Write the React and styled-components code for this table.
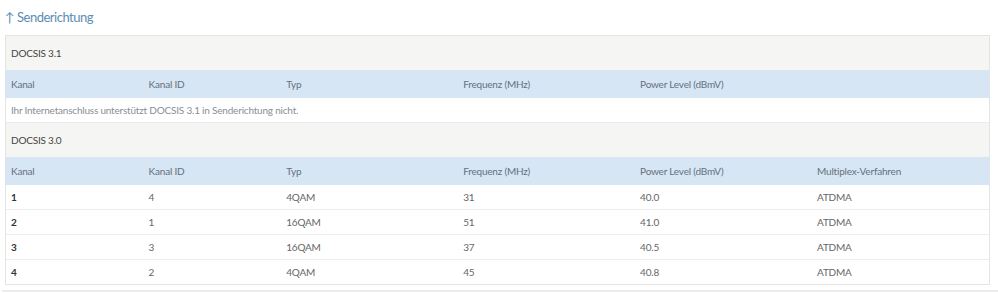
import styled, { createGlobalStyle } from 'styled-components';

const GlobalStyle = createGlobalStyle`
  html, body { margin: 0; padding: 0; background: #fff; }
  body { font-family: "Lato", "Liberation Sans", sans-serif; }
`;

const upstream31 = [];
const upstream30 = [
  { kanal: 1, id: 4, typ: '4QAM', freq: 31, power: '40.0', mux: 'ATDMA' },
  { kanal: 2, id: 1, typ: '16QAM', freq: 51, power: '41.0', mux: 'ATDMA' },
  { kanal: 3, id: 3, typ: '16QAM', freq: 37, power: '40.5', mux: 'ATDMA' },
  { kanal: 4, id: 2, typ: '4QAM', freq: 45, power: '40.8', mux: 'ATDMA' },
];

const App = () => {
  return (
    <>
      <GlobalStyle />
      <Page>
        <Title>↑ Senderichtung</Title>
        <Panel>
          <Table>
            <colgroup>
              <col width="14%" />
              <col width="14%" />
              <col width="18%" />
              <col width="18%" />
              <col width="18%" />
              <col width="18%" />
            </colgroup>
            <tbody>
              <GroupRow>
                <td colSpan={6}>DOCSIS 3.1</td>
              </GroupRow>
              <HeadRow>
                <th>Kanal</th>
                <th>Kanal ID</th>
                <th>Typ</th>
                <th>Frequenz (MHz)</th>
                <th>Power Level (dBmV)</th>
                <th></th>
              </HeadRow>
              {upstream31.length === 0 && (
                <NoteRow>
                  <td colSpan={6}>Ihr Internetanschluss unterstützt DOCSIS 3.1 in Senderichtung nicht.</td>
                </NoteRow>
              )}
              <GroupRow>
                <td colSpan={6}>DOCSIS 3.0</td>
              </GroupRow>
              <HeadRow>
                <th>Kanal</th>
                <th>Kanal ID</th>
                <th>Typ</th>
                <th>Frequenz (MHz)</th>
                <th>Power Level (dBmV)</th>
                <th>Multiplex-Verfahren</th>
              </HeadRow>
              {upstream30.map((r, i) => (
                <DataRow key={r.kanal} last={i === upstream30.length - 1}>
                  <KanalCell>{r.kanal}</KanalCell>
                  <td>{r.id}</td>
                  <td>{r.typ}</td>
                  <td>{r.freq}</td>
                  <td>{r.power}</td>
                  <td>{r.mux}</td>
                </DataRow>
              ))}
            </tbody>
          </Table>
        </Panel>
        <Rule />
      </Page>
    </>
  );
};
export default App;

const Page = styled.div`
  width: 998px;
  padding-top: 8px;
`

const Title = styled.h2`
  margin: 0 0 9px 5px;
  height: 18px;
  line-height: 18px;
  font-size: 13px;
  letter-spacing: -0.5px;
  font-weight: 400;
  color: #5b8db5;
`

const Panel = styled.div`
  margin: 0 8px 0 5px;
  border: 1px solid #e4e4e4;
  background: #fff;
`

const Table = styled.table`
  width: 100%;
  border-collapse: collapse;
  table-layout: fixed;
  font-size: 10px;
  letter-spacing: -0.2px;

  td, th {
    text-align: left;
    font-weight: 400;
    padding: 0 0 0 5px;
    white-space: nowrap;
  }
`

const GroupRow = styled.tr`
  background: #f5f5f3;
  td {
    height: 34px;
    color: #444;
  }
`

const HeadRow = styled.tr`
  background: #d6e6f5;
  th {
    height: 28px;
    color: #66707b;
  }
`

const NoteRow = styled.tr`
  td {
    height: 24px;
    color: #8a8f94;
    border-bottom: 1px solid #ececec;
  }
`

const DataRow = styled.tr`
  td {
    height: 24px;
    color: #666;
    border-bottom: ${p => (p.last ? 'none' : '1px solid #ececec')};
  }
`

const KanalCell = styled.td`
  && {
    color: #333;
    font-weight: 700;
  }
`

const Rule = styled.div`
  margin: 5px 0 0 2px;
  height: 2px;
  background: #ececec;
`
